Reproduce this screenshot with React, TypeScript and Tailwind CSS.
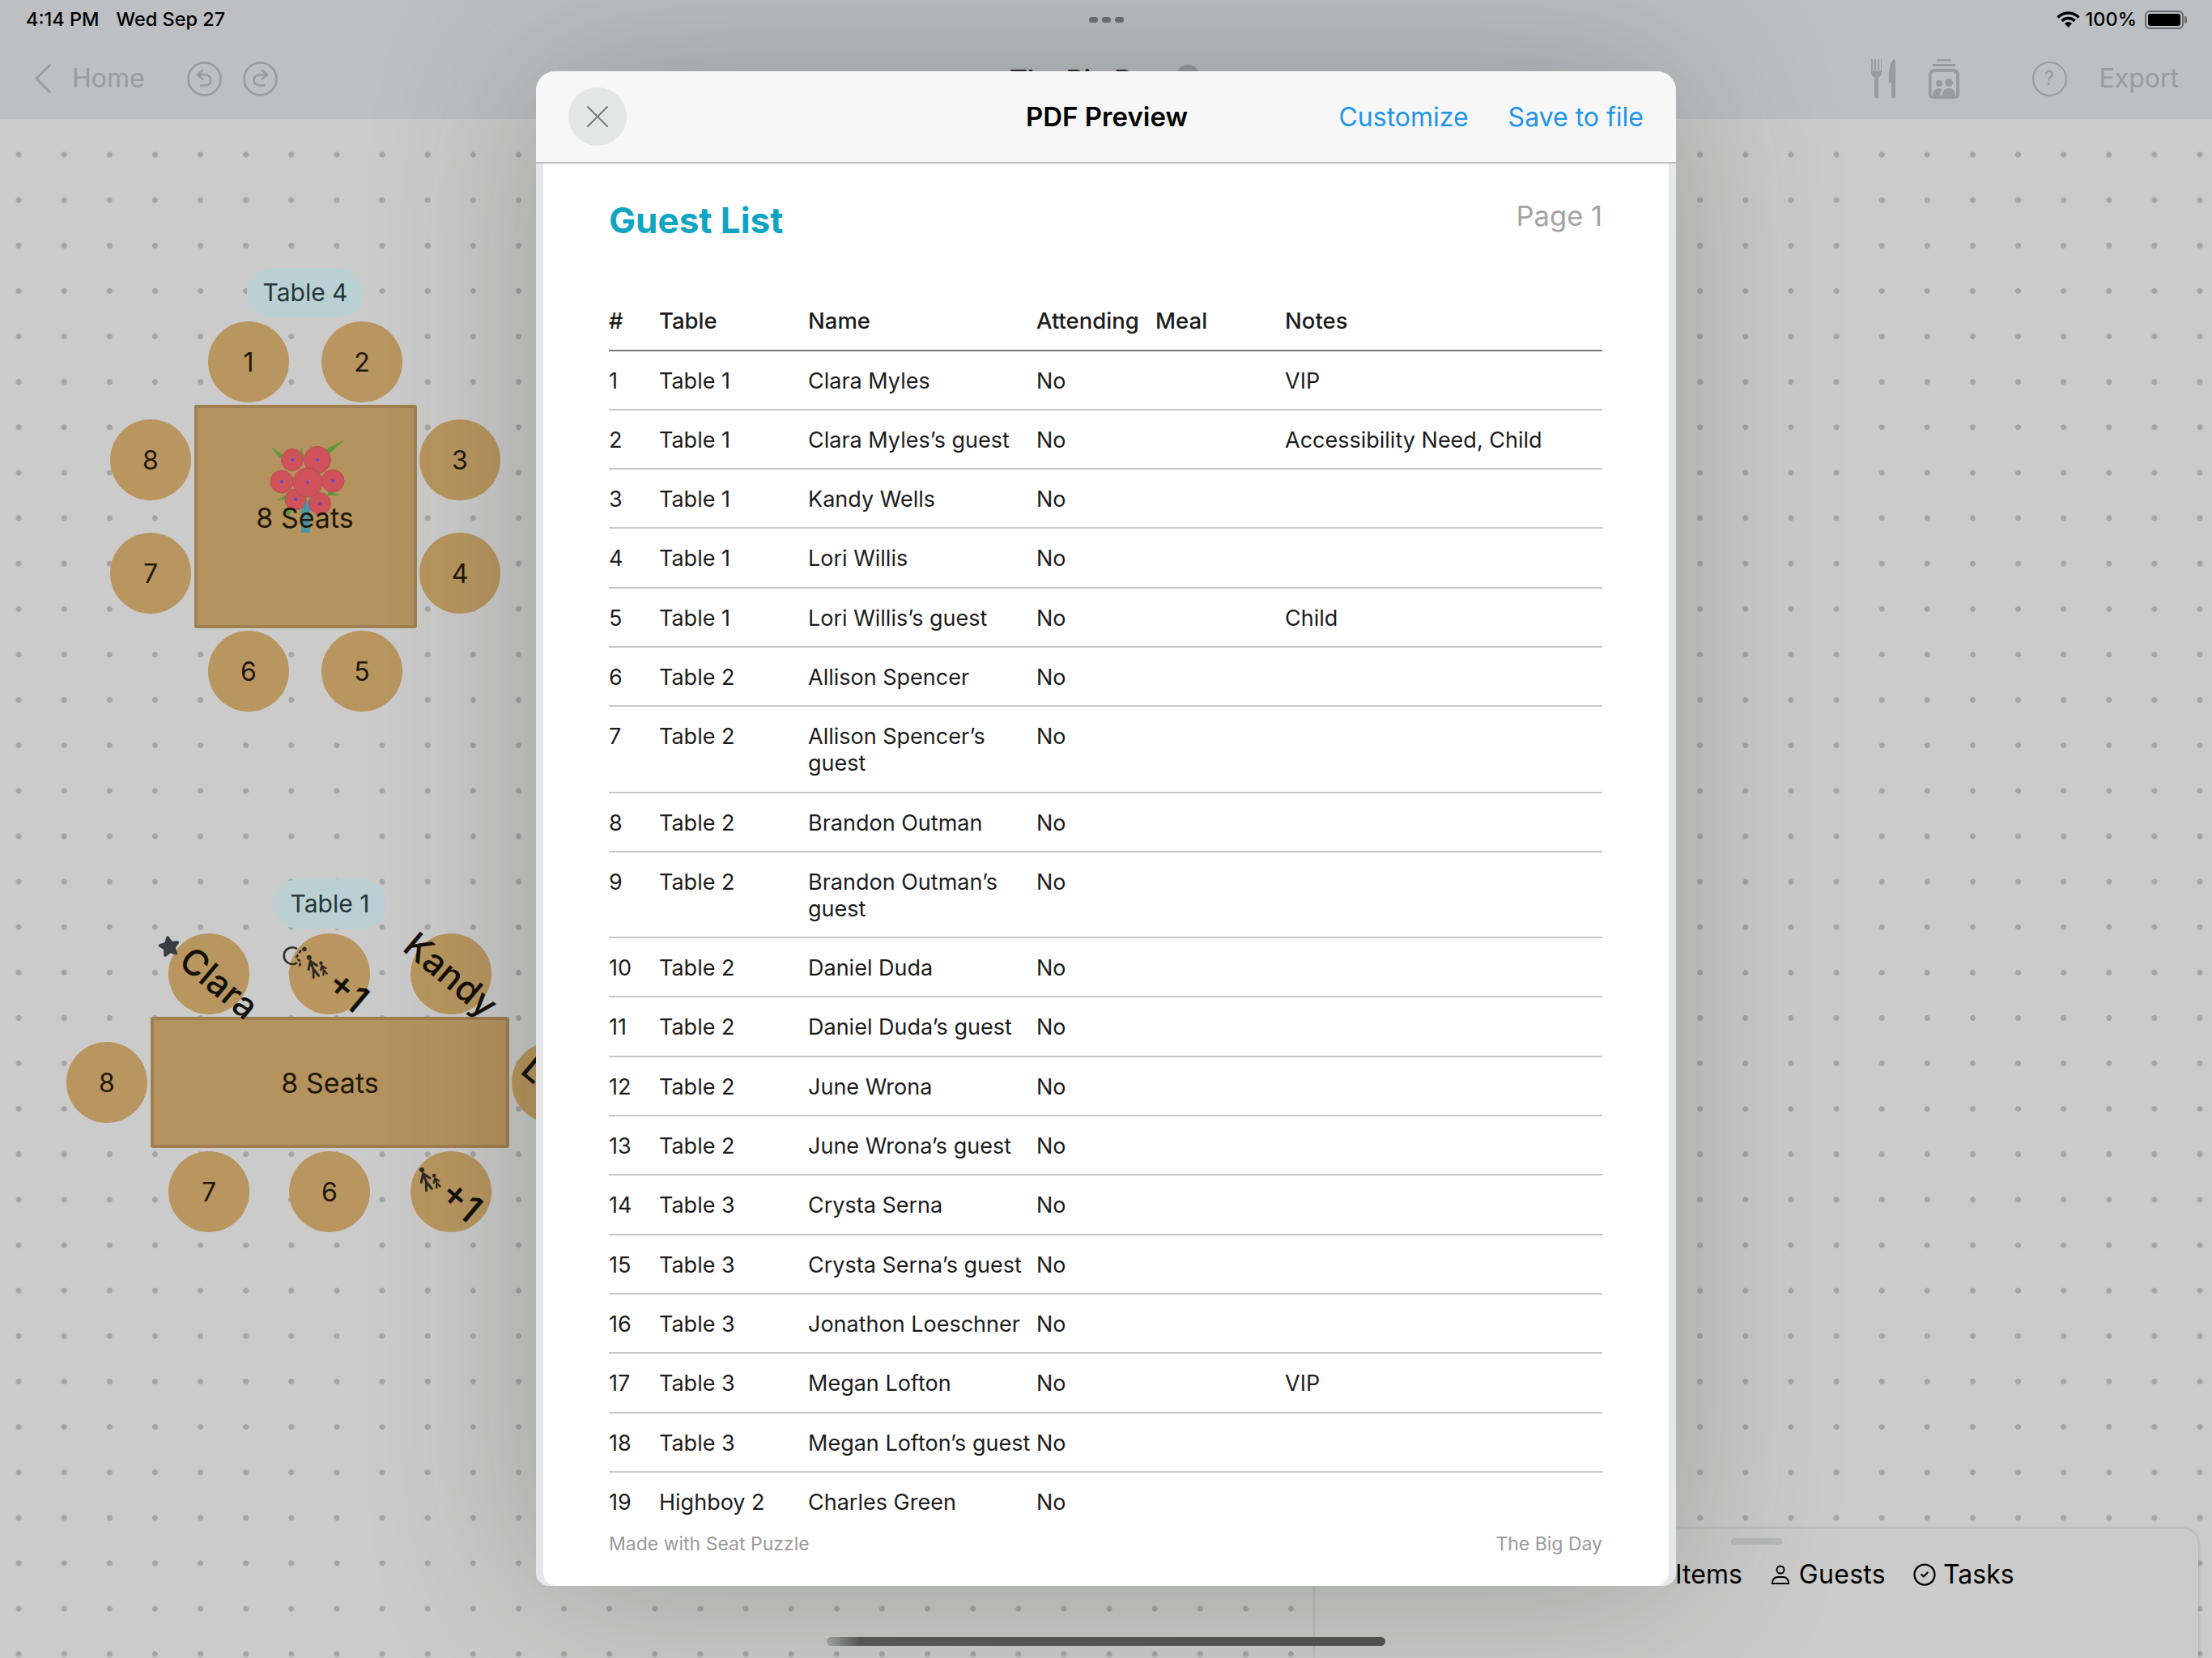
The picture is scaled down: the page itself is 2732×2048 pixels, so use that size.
import { Star, CircleCheck } from "lucide-react";

interface Guest {
  id: number;
  table: string;
  name: string;
  notes?: string;
}

const guests: Guest[] = [
  { id: 1, table: "Table 1", name: "Clara Myles", notes: "VIP" },
  { id: 2, table: "Table 1", name: "Clara Myles’s guest", notes: "Accessibility Need, Child" },
  { id: 3, table: "Table 1", name: "Kandy Wells" },
  { id: 4, table: "Table 1", name: "Lori Willis" },
  { id: 5, table: "Table 1", name: "Lori Willis’s guest", notes: "Child" },
  { id: 6, table: "Table 2", name: "Allison Spencer" },
  { id: 7, table: "Table 2", name: "Allison Spencer’s guest" },
  { id: 8, table: "Table 2", name: "Brandon Outman" },
  { id: 9, table: "Table 2", name: "Brandon Outman’s guest" },
  { id: 10, table: "Table 2", name: "Daniel Duda" },
  { id: 11, table: "Table 2", name: "Daniel Duda’s guest" },
  { id: 12, table: "Table 2", name: "June Wrona" },
  { id: 13, table: "Table 2", name: "June Wrona’s guest" },
  { id: 14, table: "Table 3", name: "Crysta Serna" },
  { id: 15, table: "Table 3", name: "Crysta Serna’s guest" },
  { id: 16, table: "Table 3", name: "Jonathon Loeschner" },
  { id: 17, table: "Table 3", name: "Megan Lofton", notes: "VIP" },
  { id: 18, table: "Table 3", name: "Megan Lofton’s guest" },
  { id: 19, table: "Highboy 2", name: "Charles Green" },
];

const columns = "grid grid-cols-[62px_184px_282px_147px_160px_1fr]";

function FamilyIcon({ className }: { className: string }) {
  return (
    <svg viewBox="0 0 28 28" className={className} fill="none" stroke="#2e2a24" strokeLinecap="round">
      <circle cx="10" cy="4" r="2.6" fill="#2e2a24" stroke="none" />
      <path d="M10 8v9M10 8l-5 8M10 8l5 7M10 17l-3 9M10 17l3 9" strokeWidth="2.6" />
      <circle cx="20" cy="14" r="2" fill="#2e2a24" stroke="none" />
      <path d="M20 17v5M20 17l-3 4M20 17l3 4M20 22l-2 5M20 22l2 5" strokeWidth="2" />
    </svg>
  );
}

function WheelchairIcon({ className }: { className: string }) {
  return (
    <svg viewBox="0 0 28 28" className={className} fill="none" stroke="#2e2a24" strokeWidth="2.2" strokeLinecap="round">
      <circle cx="17" cy="4" r="2.4" fill="#2e2a24" stroke="none" />
      <path d="M10 9a9 9 0 1 0 10 12" />
      <path d="M15 8l1 9h7l2 6" strokeDasharray="2 4" />
    </svg>
  );
}

function Chair({ pos, children }: { pos: string; children?: React.ReactNode }) {
  return (
    <div className={`absolute w-[100px] h-[100px] rounded-full bg-[#b9965f] flex items-center justify-center pt-[2px] text-[32px] text-[#1f170a] ${pos}`}>
      {children}
    </div>
  );
}

function Bouquet() {
  const flowers = [
    [361, 568, 13.5],
    [392, 568, 16.5],
    [348, 595, 14],
    [411, 594, 14],
    [365, 617, 13],
    [395, 622, 13.5],
    [380, 596, 18],
  ];
  return (
    <svg viewBox="330 540 100 120" className="absolute left-[330px] top-[393px] w-[100px] h-[120px]">
      <rect x="372" y="618" width="11" height="40" fill="#4c93a6" />
      <path d="M372 552l4 14-6-2zM426 543l-22 20-6-6zM334 552l16 10-4 4zM342 618l12-7 2 6zM420 612l-14-6-2 6zM350 628l6 10 5-8z" fill="#5f9a3a" />
      {flowers.map(([cx, cy, r], i) => (
        <g key={i}>
          <circle cx={cx} cy={cy} r={r} fill="#cf5159" stroke="#a9504c" strokeWidth="0.8" />
          <circle cx={cx} cy={cy} r="2" fill="#5a49d6" />
        </g>
      ))}
    </svg>
  );
}

export default function App() {
  return (
    <div className="relative w-[2732px] h-[2048px] overflow-hidden flex flex-col font-[family-name:Inter,sans-serif] bg-[#cbcbcb]">
      <header className="h-[147px] shrink-0 bg-[#bebfc3] flex flex-col">
        {/* status bar */}
        <div className="relative h-[48px] flex items-center justify-between pl-[32px] pr-[31px] text-[23.5px] font-medium text-black">
          <div className="flex gap-[21px]">
            <span>4:14 PM</span>
            <span>Wed Sep 27</span>
          </div>
          <div className="absolute left-[1345px] top-[21px] flex gap-[5px]">
            <span className="w-[11px] h-[7px] rounded-full bg-[#6f7074]" />
            <span className="w-[11px] h-[7px] rounded-full bg-[#6f7074]" />
            <span className="w-[11px] h-[7px] rounded-full bg-[#6f7074]" />
          </div>
          <div className="flex items-center">
            <svg viewBox="0 0 29 20" className="w-[29px] h-[20px] mr-[7px]" fill="none" stroke="#000" strokeWidth="3.4">
              <path d="M1.5 7.5a18 18 0 0 1 26 0" />
              <path d="M6.5 12a11 11 0 0 1 16 0" />
              <path d="M14.5 20l-4.5-5a6 6 0 0 1 9 0z" fill="#000" stroke="none" />
            </svg>
            <span className="mr-[10px]">100%</span>
            <div className="w-[48px] h-[23px] rounded-[6px] border-2 border-[#68696c] p-[2px]">
              <div className="w-full h-full rounded-[3px] bg-black" />
            </div>
            <div className="w-[3px] h-[9px] ml-[1px] rounded-r-full bg-[#68696c]" />
          </div>
        </div>

        {/* toolbar */}
        <div className="relative flex-1 flex items-center pl-[43px] pr-[41px] pb-[1px] text-[#9a9b9e]">
          <svg viewBox="0 0 20 36" className="w-[20px] h-[36px] mr-[26px]" fill="none" stroke="currentColor" strokeWidth="2.6" strokeLinecap="round" strokeLinejoin="round">
            <path d="M18.5 1.5L2 18l16.5 16.500" />
          </svg>
          <span className="text-[32px] w-[89px] mr-[53px]">Home</span>
          <svg viewBox="0 0 43 43" className="w-[43px] h-[43px] mr-[26px]" fill="none" stroke="currentColor" strokeWidth="2.6" strokeLinecap="round" strokeLinejoin="round">
            <circle cx="21.5" cy="21.5" r="20" />
            <path d="M19 11l-6 5.5 6 5M13 16.5h10a6.5 6.5 0 0 1 0 13h-6" />
          </svg>
          <svg viewBox="0 0 43 43" className="w-[43px] h-[43px]" fill="none" stroke="currentColor" strokeWidth="2.6" strokeLinecap="round" strokeLinejoin="round">
            <circle cx="21.5" cy="21.5" r="20" />
            <path d="M24 11l6 5.5-6 5M30 16.5H20a6.5 6.5 0 0 0 0 13h6" />
          </svg>

          <span className="absolute left-[1247px] top-[26px] text-[33px] font-semibold text-[#25262a]">The Big Day</span>
          <span className="absolute left-[1452px] top-[32px] w-[30px] h-[30px] rounded-full bg-[#9b9c9f]" />

          <svg viewBox="0 0 30 49" className="ml-auto w-[30px] h-[49px] mr-[41px]" fill="currentColor">
            <path d="M0 0h2v15h2V0h2v15h2V0h2v15h2V0h1v17c0 3-2 5-4 6v23a2.5 2.5 0 0 1-5 0V23c-2-1-4-3-4-6z" />
            <path d="M28 0c1 0 2 1 2 2v44a2.5 2.5 0 0 1-5 0V29h-3c-1-10 0-24 6-29z" />
          </svg>
          <svg viewBox="0 0 38 49" className="w-[38px] h-[49px] mr-[90px]" fill="currentColor">
            <rect x="10" y="0" width="18" height="2.5" rx="1" />
            <rect x="5" y="6" width="28" height="3" rx="1" />
            <path d="M7 12h24a7 7 0 0 1 7 7v25a5 5 0 0 1-5 5H5a5 5 0 0 1-5-5V19a7 7 0 0 1 7-7zm0 4a4 4 0 0 0-3.500 4v25h30.500V20a4 4 0 0 0-3.500-4z" fillRule="evenodd" />
            <circle cx="13" cy="30" r="4" />
            <circle cx="25" cy="29" r="5" />
            <path d="M5 45c0-5 3-9 8-9 2 0 3 1 4 2-2 2-3 4-3 7zM17 45c0-6 3-9 8-9s8 3 8 9z" />
          </svg>
          <div className="w-[43px] h-[43px] mr-[40px] rounded-full border-[2.5px] border-current flex items-center justify-center text-[24px]">?</div>
          <span className="text-[32px]">Export</span>
        </div>
      </header>

      {/* floor plan */}
      <main className="relative flex-1 bg-[radial-gradient(circle,#a4a5a6_3.2px,transparent_3.8px)] bg-[size:56.13px_56.13px] bg-[position:-5px_16px]">
        <div className="absolute left-[305px] top-[184px] w-[144px] h-[61px] rounded-full bg-[#bad0d2] flex items-center justify-center text-[30px] text-[#26363b]">Table 4</div>
        <Chair pos="left-[257px] top-[250px]">1</Chair>
        <Chair pos="left-[397px] top-[250px]">2</Chair>
        <Chair pos="left-[136px] top-[371px]">8</Chair>
        <Chair pos="left-[518px] top-[371px]">3</Chair>
        <Chair pos="left-[136px] top-[511px]">7</Chair>
        <Chair pos="left-[518px] top-[511px]">4</Chair>
        <Chair pos="left-[257px] top-[632px]">6</Chair>
        <Chair pos="left-[397px] top-[632px]">5</Chair>
        <div className="absolute left-[240px] top-[353px] w-[275px] h-[276px] rounded-[3px] border-[4px] border-[#a08050] bg-[#b5935f]" />
        <Bouquet />
        <div className="absolute left-[239px] top-[467px] w-[275px] text-center text-[34px] text-[#1f170a]">8 Seats</div>

        <div className="absolute left-[338px] top-[939px] w-[139px] h-[61px] rounded-full bg-[#bad0d2] flex items-center justify-center text-[30px] text-[#26363b]">Table 1</div>
        <div className="absolute left-[186px] top-[1109px] w-[443px] h-[162px] rounded-[3px] border-[4px] border-[#a08050] bg-[#b5935f] flex items-center justify-center text-[34px] text-[#1f170a]">8 Seats</div>
        <Star className="absolute left-[195px] top-[1008px] w-[28px] h-[28px] z-10 rotate-[-10deg] text-[#3a3d42]" fill="currentColor" />
        <Chair pos="left-[208px] top-[1006px]">
          <span className="text-[44px] font-medium rotate-[40deg] translate-x-[13px] translate-y-[10px] text-[#14100a]">Clara</span>
        </Chair>
        <Chair pos="left-[357px] top-[1006px]">
          <WheelchairIcon className="absolute left-[-7px] top-[10px] w-[32px] h-[32px] rotate-[40deg]" />
          <FamilyIcon className="absolute left-[17px] top-[23px] w-[32px] h-[32px] -rotate-[20deg]" />
          <span className="text-[47px] font-medium rotate-[40deg] translate-x-[22px] translate-y-[20px] text-[#14100a]">+1</span>
        </Chair>
        <Chair pos="left-[507px] top-[1006px]">
          <span className="text-[44px] font-medium rotate-[40deg] text-[#14100a]">Kandy</span>
        </Chair>
        <Chair pos="left-[82px] top-[1140px]">8</Chair>
        <Chair pos="left-[632px] top-[1140px]">
          <span className="text-[44px] font-medium rotate-[40deg] text-[#14100a]">Lori</span>
        </Chair>
        <Chair pos="left-[208px] top-[1275px]">7</Chair>
        <Chair pos="left-[357px] top-[1275px]">6</Chair>
        <Chair pos="left-[507px] top-[1275px]">
          <FamilyIcon className="absolute left-[6px] top-[16px] w-[33px] h-[33px] -rotate-[20deg]" />
          <span className="text-[47px] font-medium rotate-[40deg] translate-x-[12px] translate-y-[10px] text-[#14100a]">+1</span>
        </Chair>
      </main>

      {/* bottom sheet */}
      <div className="absolute left-[1624px] right-[17px] top-[1888px] bottom-0 rounded-t-[20px] bg-[#cbcbcb] shadow-[0_0_4px_rgba(0,0,0,0.2)] flex flex-col">
        <div className="self-center mt-[12px] w-[63px] h-[8px] rounded-full bg-[#b7b8b8]" />
        <div className="flex items-center mt-[17px] pl-[445px] text-[32px] leading-[40px] text-black">
          <span className="mr-[35px]">Items</span>
          <svg viewBox="0 0 24 24" className="w-[24px] h-[24px] mr-[11px]" fill="none" stroke="#000" strokeWidth="2">
            <circle cx="12" cy="6" r="4.500" />
            <path d="M2 23v-1c0-4 3-7 6.500-7h7c3.500 0 6.500 3 6.500 7v1z" />
          </svg>
          <span className="mr-[33px] tracking-[0.3px]">Guests</span>
          <CircleCheck className="w-[30px] h-[30px] mr-[8px]" strokeWidth={1.8} />
          <span>Tasks</span>
        </div>
      </div>

      {/* home indicator */}
      <div className="absolute left-[1021px] top-[2022px] w-[690px] h-[11px] rounded-full bg-[linear-gradient(90deg,#a9abaa,#5a5b5b_40px,#555)]" />

      {/* pdf preview */}
      <section className="absolute left-[662px] top-[88px] w-[1408px] h-[1871px] rounded-t-[24px] rounded-b-[16px] bg-[#e6e7e9] shadow-[0_0_200px_rgba(30,40,25,0.28)] flex flex-col overflow-hidden">
        <div className="h-[114px] shrink-0 bg-[#f6f7f6] border-b-2 border-[#bcbdbd] flex items-center justify-between pl-[40px] pr-[40px] relative">
          <button className="w-[72px] h-[72px] rounded-full bg-[#e4e5e5] flex items-center justify-center">
            <svg viewBox="0 0 28 28" className="w-[28px] h-[28px]" fill="none" stroke="#78797a" strokeWidth="2" strokeLinecap="round">
              <path d="M2 2l24 24M26 2L2 26" />
            </svg>
          </button>
          <h1 className="absolute left-[605px] pt-[2px] text-[33px] font-semibold text-black">PDF Preview</h1>
          <div className="flex gap-[49px] pt-[2px] text-[32px] text-[#1f95e8]">
            <span>Customize</span>
            <span>Save to file</span>
          </div>
        </div>
        <div className="flex-1 mx-[9px] bg-white rounded-b-[16px] pl-[81px] pr-[82px] flex flex-col overflow-hidden">
          <div className="flex items-start justify-between pt-[43px] h-[177.5px] shrink-0">
            <h2 className="text-[44px] leading-[54px] font-bold text-[#0ea5c2]">Guest List</h2>
            <span className="text-[34.5px] leading-[44px] text-[#a3a3a3]">Page 1</span>
          </div>
          <div className="text-[27px] leading-[33px] text-[#1c1c1c]">
            <div className={`${columns} h-[54px] text-[27.5px] border-b-2 border-[#77787a] font-medium`}>
              <span>#</span>
              <span>Table</span>
              <span>Name</span>
              <span>Attending</span>
              <span>Meal</span>
              <span>Notes</span>
            </div>
            {guests.map((guest) => (
              <div key={guest.id} className={`${columns} pt-[20px] pb-[18.3px] border-b-2 border-[#c6c7c7] last:border-b-0`}>
                <span>{guest.id}</span>
                <span>{guest.table}</span>
                <span>{guest.name}</span>
                <span>No</span>
                <span />
                <span>{guest.notes}</span>
              </div>
            ))}
          </div>
          <div className="mt-auto mb-[38px] flex justify-between text-[23px] leading-[28px] text-[#9a9a9a]">
            <span>Made with Seat Puzzle</span>
            <span>The Big Day</span>
          </div>
        </div>
      </section>
    </div>
  );
}
